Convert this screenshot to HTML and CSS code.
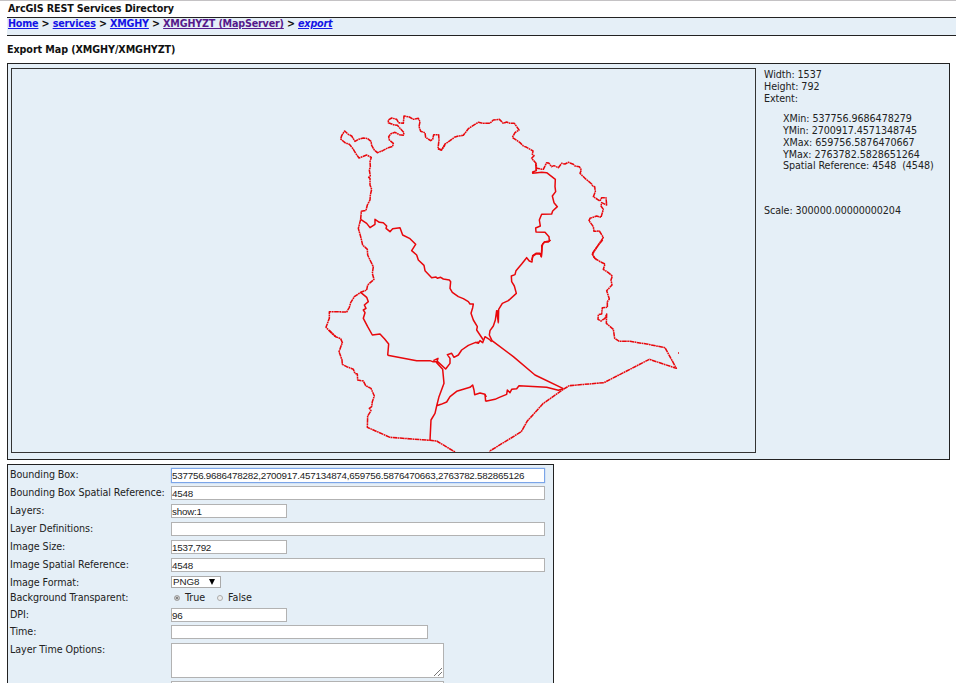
FILE: index.html
```html
<!DOCTYPE html>
<html lang="en">
<head>
<meta charset="utf-8">
<title>Export Map (XMGHY/XMGHYZT)</title>
<link rel="stylesheet" href="styles.css">
</head>
<body>
<header class="title"><span>ArcGIS REST Services Directory</span></header>
<nav class="crumbs"><a href="#">Home</a> &gt; <a href="#">services</a> &gt; <a href="#">XMGHY</a> &gt; <a href="#" class="visited">XMGHYZT (MapServer)</a> &gt; <a href="#"><i>export</i></a></nav>
<h2>Export Map (XMGHY/XMGHYZT)</h2>
<section class="result">
<svg class="map" viewBox="12 69 743 383" fill="none">
<g class="fine" transform="translate(320 100) scale(.33333)">
<path d="M122 357L124 334 138 331 142 315 150 300 151 285 155 268 150 255 150 235 146 232 151 228 148 210 151 200 150 185 154 172 140 165 117 174 107 160 98 145 88 133 75 128 62 117 65 107 74 93 85 103 95 108 105 124 115 118 130 114 143 116 153 124 155 136 163 150 172 158 188 152 205 143 218 139 220 130 208 120 206 110 213 101 225 97 238 104 250 106 252 98 240 85 232 76 220 74 205 68 205 60 215 54 230 58 236 68 250 70 252 48 268 51 280 58 295 55 300 65 297 80 302 94 315 98 317 112 332 122 338 118 341 104 356 104 357 120 354 146 364 150 375 135"/>
</g>
<g transform="translate(430 100) scale(.33333)">
<path class="fine" d="M24 146L35 150 45 132 60 122 73 112 85 108 100 106 115 86 130 76 145 67 160 70 180 70 190 60 208 58 212 62 220 70 230 66 240 70 253 70 260 80 267 90 255 98 247 112 270 128 280 138 290 142 309 153 307 163 312 167 305 175 318 190 320 205 340 208 350 188 356 189 365 200 372 197 385 203 395 190 405 192 415 187 430 193 435 198 448 200 454 210 450 220 465 235 485 252 488 258 494 260 496 275 490 290 510 303 515 293 528 293 530 315 515 308 513 318 520 328 513 352 500 348 480 355 477 362 490 380 492 394 508 393 520 412 505 435 487 460 492 472 500 480"/>
<path class="solid" d="M317 191L319 212 308 216 308 220 335 217 350 218 376 238 375 260 377 275 367 288 372 308 382 320 368 333 365 342 335 343 328 360 331 378 317 384 318 396 345 397 357 410 358 423 343 426 335 437 336 450 334 470 332 463 320 461 309 468 305 480M318 193V212"/>
</g>
<g transform="translate(320 210) scale(.33333)">
<path class="fine" d="M122 28L115 55 122 80 128 105 142 118 143 135 150 150 160 170 157 190 162 208 143 225 140 240 122 247 103 260 92 278 88 292 80 306 28 305 28 325 18 352 35 370 47 380"/>
<path class="solid" d="M122 28L140 40 150 53 165 43 165 28 178 37 190 38 200 48 198 55 210 65 218 56 240 53 248 75 270 86 287 103 275 122 290 135 295 150 312 166 315 182 335 203 348 201 352 205 362 202 370 207 388 210 392 215 390 235 397 247 415 260 430 266 445 275 450 282 460 282 458 293 453 310 460 330 472 350 470 360 490 390M122 247L140 262 145 275 133 285 138 295 130 300 135 308 130 325 143 350 157 375 180 372 194 387 206 402 203 436"/>
</g>
<g transform="translate(320 330) scale(.33333)">
<path class="fine" d="M27 0L47 20 62 26 67 38 57 65 66 90 67 103 80 110 100 118 105 130 112 132 113 150 130 153 137 167 153 175 163 198 157 215 155 230 148 235 153 242 143 258 142 292 210 322 330 331 350 333 405 366"/>
<path class="solid" d="M515 35L508 28 495 20 488 38 480 32 475 40 467 37 445 46 425 60 415 75 402 82 395 70 382 74 390 85 390 100 377 117 353 95 338 95 330 92 290 92 203 76M340 92L354 85 350 98 368 118 372 160 357 200 350 228 345 250 333 270 330 331M353 222L350 227 363 223 380 216 390 200 410 184 430 178 450 172 458 165 462 180 464 194 480 189 495 193 499 201M467 38L477 36"/>
</g>
<g transform="translate(480 240) scale(.33333)">
<path class="fine" d="M368 0L355 15 337 43 345 55 362 66 375 72 370 88 385 98 397 108 393 120 396 135 380 152 388 177 382 185 382 202 367 203 365 222 355 224 354 238 363 243 375 235 380 222 379 250 400 268 404 295 418 304 450 304 500 312 555 323 589 385 508 358 440 393 372 428 268 437 250 448 190 490 142 543 124 575 28 634M594 339h3"/>
<path class="solid" d="M212 0L205 6 195 5 188 12 185 30 184 50 180 40 168 40 158 47 156 66 148 63 140 53 125 72 108 92 105 104 94 108 95 125 103 138 109 160 85 182 67 190 56 208 55 248 50 212 46 240 40 258 30 272 28 285 36 302 100 350 165 405 250 446M51 210L55 248"/>
<path class="solid" d="M17 484L15 463M17 484L45 478 58 472 80 463 82 450 90 458 95 448 110 446 117 437 200 442 235 451 250 446"/>
</g>
</svg>
<div class="info">
<div>Width: 1537</div><div>Height: 792</div><div>Extent:</div>
<div class="extent"><div>XMin: 537756.9686478279</div><div>YMin: 2700917.4571348745</div><div>XMax: 659756.5876470667</div><div>YMax: 2763782.5828651264</div><div>Spatial Reference: 4548 &nbsp;(4548)</div></div>
<div>Scale: 300000.00000000204</div>
</div>
</section>
<form class="params">
<label>Bounding Box:</label><div class="field focus wide">537756.9686478282,2700917.457134874,659756.5876470663,2763782.582865126</div>
<label>Bounding Box Spatial Reference:</label><div class="field wide">4548</div>
<label>Layers:</label><div class="field short">show:1</div>
<label>Layer Definitions:</label><div class="field wide"></div>
<label>Image Size:</label><div class="field short">1537,792</div>
<label>Image Spatial Reference:</label><div class="field wide">4548</div>
<label>Image Format:</label><div class="select"><span>PNG8</span><svg width="6" height="6" viewBox="0 0 6 6"><path d="M0 0h6L3 6z"/></svg></div>
<label>Background Transparent:</label><div class="radios"><i class="radio on"></i><span>True</span><i class="radio"></i><span>False</span></div>
<label>DPI:</label><div class="field short">96</div>
<label>Time:</label><div class="field medium"></div>
<label>Layer Time Options:</label><div class="area"><svg width="8" height="8" viewBox="0 0 8 8"><path d="M0 8L8 0M4 8L8 4" stroke="#777" fill="none"/></svg></div>
<label></label><div class="field last"></div>
</form>
</body>
</html>
```
FILE: styles.css
```css
* { box-sizing: border-box; }
html { height: 683px; overflow: hidden; }
body {
  margin: 0;
  height: 683px;
  overflow: hidden;
  border-top: 1px solid #c4c2c4;
  background: #fff;
  color: #222;
  font: 9.6px/11.75px "DejaVu Sans", Verdana, sans-serif;
  letter-spacing: -0.08px;
}
.title, .crumbs, h2 { margin: 0 0 0 7px; font-size: 9.6px; font-weight: bold; letter-spacing: -0.12px; color: #111; white-space: nowrap; }
.title { height: 16px; padding-top: 2px; padding-left: 1px; }
.crumbs { height: 19px; padding: 0 0 0 1px; border-top: 1px solid #222; border-bottom: 1px solid #222; background: #e5eff7; letter-spacing: -0.17px; }
.crumbs a { color: #1414e6; text-decoration: underline; }
.crumbs .visited { color: #551a8b; }
h2 { height: 27px; padding-top: 8px; letter-spacing: -0.08px; }
.result {
  display: flex;
  width: 943px;
  height: 397px;
  margin-left: 7px;
  padding: 4px 4px 4px 3px;
  border: 1px solid #222;
  background: #e5eff7;
}
.map { flex: none; width: 745px; height: 385px; border: 1px solid #333; }
.map path { stroke: #e8080c; stroke-linejoin: round; }
.map .fine, .map .fine path { stroke-width: 4.6; stroke-dasharray: 14 1.5 5 1.5; }
.map .solid { stroke-width: 4.5; }
.info { margin-left: 8px; padding-top: 1px; white-space: nowrap; }
.extent { margin: 9px 0 32.5px 19px; }
.params {
  display: grid;
  grid-template-columns: 161px 1fr;
  grid-template-rows: repeat(6, 18px) 15px 17px 17px 18px 38px 18px;
  width: 547px;
  height: 230px;
  margin: 4px 0 0 7px;
  padding: 1px 2px 2px;
  border: 1px solid #222;
  background: #e5eff7;
}
.params label { padding-top: 3px; white-space: nowrap; }
.field {
  height: 14px;
  margin-top: 2px;
  border: 1px solid #b2b2b2;
  background: #fff;
  font: 9.8px/13px "Liberation Sans", Arial, sans-serif;
  letter-spacing: -0.22px;
  white-space: nowrap;
}
.wide { width: 374px; }
.short { width: 116px; }
.medium { width: 257px; }
.last { width: 273px; }
.focus { height: 15px; border-color: #7ba5e8; box-shadow: 0 0 1px #7ba5e8; }
.select {
  display: flex;
  align-items: center;
  justify-content: space-between;
  width: 50px;
  height: 12px;
  margin-top: 2px;
  padding: 0 5px 0 1px;
  border: 1px solid #aaa;
  background: #fff;
  font: 9.8px/10px "Liberation Sans", Arial, sans-serif;
}
.radios { display: flex; align-items: center; height: 15px; margin-top: 1px; padding-left: 3px; }
.radio { width: 6px; height: 6px; border: 1px solid #aaa; border-radius: 50%; background: #eee; }
.radio.on { background: #666; box-shadow: inset 0 0 0 1px #ddd; }
.radios span { margin: 0 12px 0 5px; }
.area { display: flex; align-items: flex-end; justify-content: flex-end; width: 273px; height: 35px; margin-top: 2px; padding: 1px; border: 1px solid #b2b2b2; background: #fff; }
```
